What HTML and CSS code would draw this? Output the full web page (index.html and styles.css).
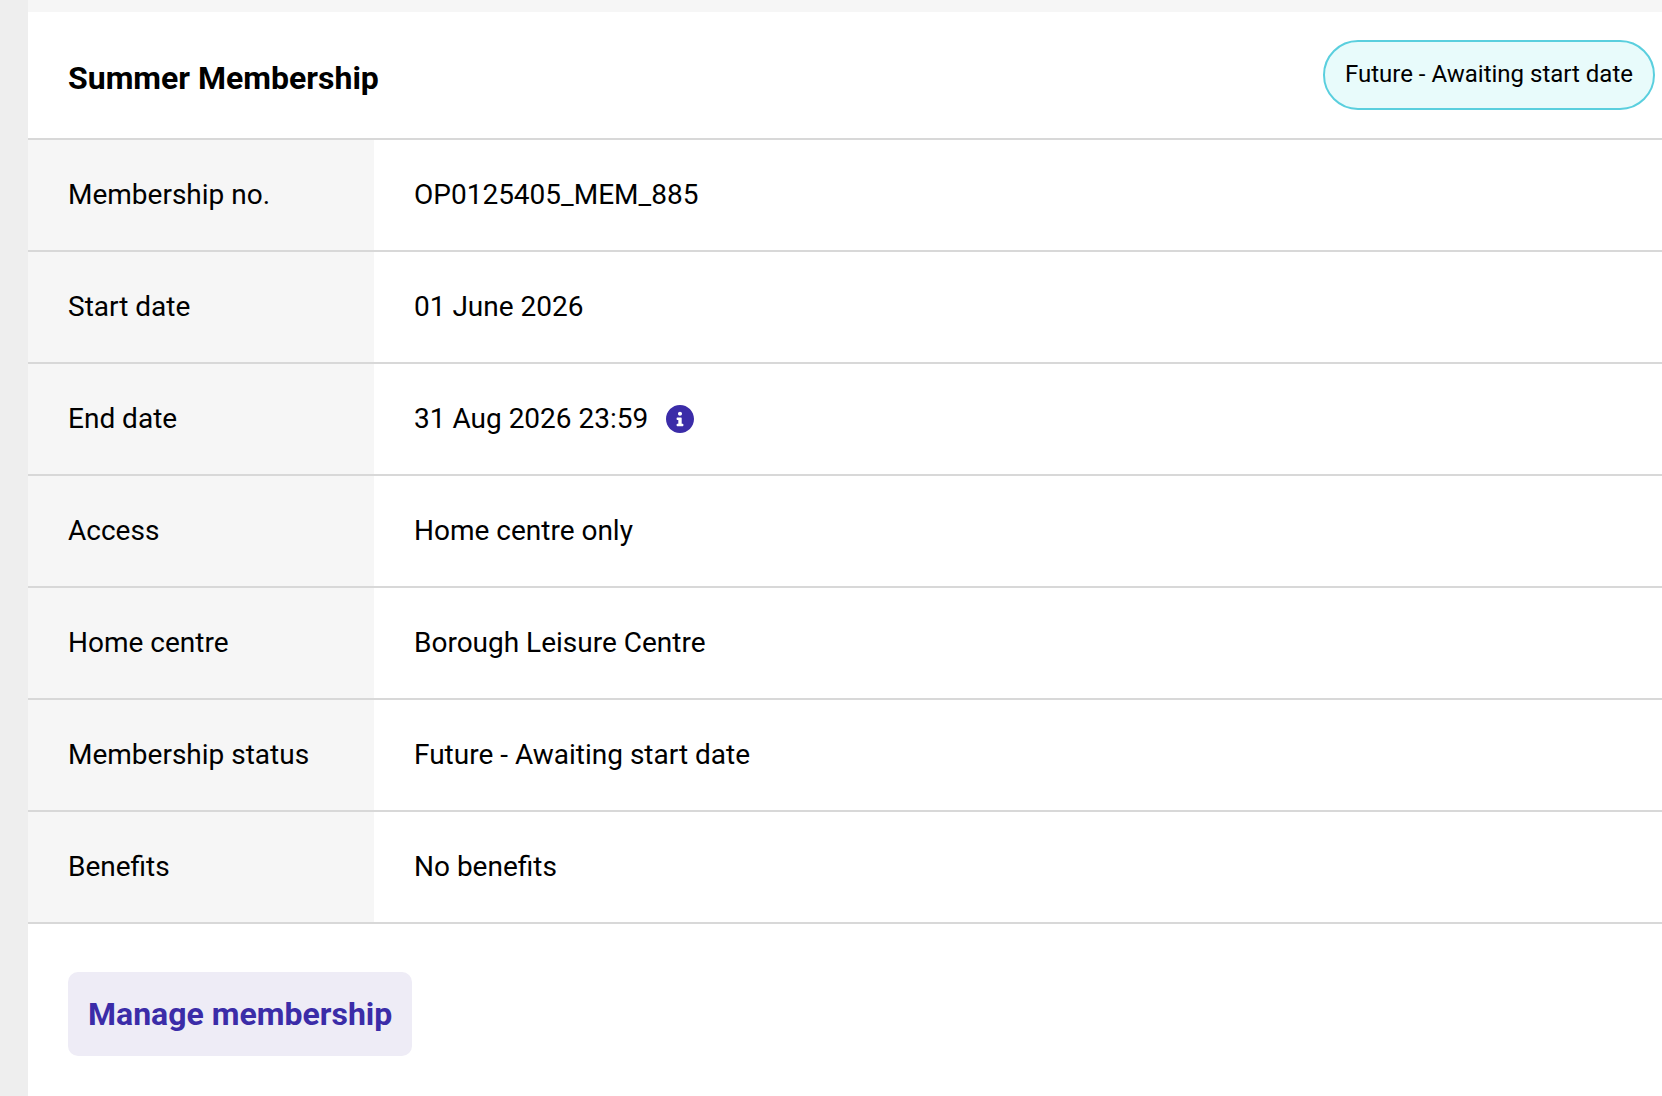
FILE: index.html
```html
<!DOCTYPE html>
<html lang="en">
<head>
<meta charset="utf-8">
<title>Summer Membership</title>
<link rel="stylesheet" href="styles.css">
</head>
<body>
<main class="page">
  <section class="card">
    <header class="card-header">
      <h1 class="card-title">Summer Membership</h1>
      <span class="badge">Future - Awaiting start date</span>
    </header>
    <table class="details">
      <tbody>
        <tr><th scope="row">Membership no.</th><td>OP0125405_MEM_885</td></tr>
        <tr><th scope="row">Start date</th><td>01 June 2026</td></tr>
        <tr><th scope="row">End date</th><td><div class="with-info">31 Aug 2026 23:59
          <button class="info" type="button" aria-label="End date information"><svg viewBox="8 8 496 496" aria-hidden="true"><path fill="currentColor" d="M256 8C119 8 8 119 8 256s111 248 248 248 248-111 248-248S393 8 256 8zm0 118c20 0 36 16 36 36s-16 36-36 36-36-16-36-36 16-36 36-36zm60 246c0 6.600-5.400 12-12 12h-96c-6.600 0-12-5.400-12-12v-20c0-6.600 5.400-12 12-12h18v-68h-18c-6.600 0-12-5.400-12-12v-20c0-6.600 5.400-12 12-12h66c6.600 0 12 5.400 12 12v100h18c6.600 0 12 5.400 12 12v20z"/></svg></button></div></td></tr>
        <tr><th scope="row">Access</th><td>Home centre only</td></tr>
        <tr><th scope="row">Home centre</th><td>Borough Leisure Centre</td></tr>
        <tr><th scope="row">Membership status</th><td>Future - Awaiting start date</td></tr>
        <tr><th scope="row">Benefits</th><td>No benefits</td></tr>
      </tbody>
    </table>
    <footer class="card-footer">
      <button class="manage" type="button">Manage membership</button>
    </footer>
  </section>
</main>
</body>
</html>
```
FILE: styles.css
```css
* { box-sizing: border-box; }
body {
  margin: 0;
  background: #eee;
  color: #000;
  font-family: Roboto, sans-serif;
  font-size: 28px;
  line-height: 40px;
}
.page {
  min-height: 100vh;
  margin-left: 28px;
  padding-top: 12px;
  background: #f6f6f6;
}
.card {
  min-height: calc(100vh - 12px);
  background: #fff;
}
.card-header {
  display: flex;
  justify-content: space-between;
  align-items: center;
  padding: 28px 7px 28px 40px;
  border-bottom: 2px solid #d8d8d8;
}
.card-title {
  margin: 0;
  padding-top: 6px;
  font-size: 32px;
  font-weight: 700;
}
.badge {
  padding: 14px 20px 16px;
  border: 2px solid #5acfde;
  border-radius: 35px;
  background: #e8fbfb;
  font-size: 24px;
  line-height: 36px;
}
.details {
  width: 100%;
  border-collapse: separate;
  border-spacing: 0;
}
.details th,
.details td {
  height: 112px;
  padding: 0 40px;
  border-bottom: 2px solid #d8d8d8;
  text-align: left;
  font-weight: 400;
}
.details th {
  width: 346px;
  background: #f6f6f6;
}
.with-info {
  display: flex;
  align-items: center;
  gap: 18px;
}
.info {
  display: flex;
  padding: 0;
  border: 0;
  background: none;
  color: #3b2ca8;
}
.info svg {
  width: 28px;
  height: 28px;
}
.card-footer {
  padding: 48px 40px;
}
.manage {
  padding: 22px 20px;
  border: 0;
  border-radius: 10px;
  background: #eeecf6;
  color: #3b2ca8;
  font: 700 32px/40px Roboto, sans-serif;
}
```
